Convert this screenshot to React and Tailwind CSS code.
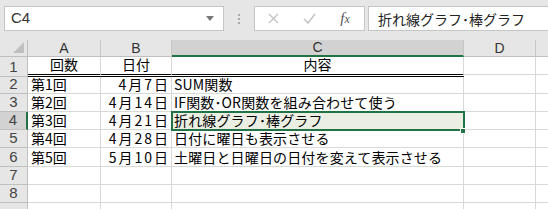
const jp = { fontFamily: '"Noto Sans CJK JP", "Noto Sans", sans-serif' };
const ui = { fontFamily: '"Liberation Sans", Arial, sans-serif' };

const rows = [
  ['回数', '日付', '内容'],
  ['第1回', '4月7日', 'SUM関数'],
  ['第2回', '4月14日', 'IF関数･OR関数を組み合わせて使う'],
  ['第3回', '4月21日', '折れ線グラフ･棒グラフ'],
  ['第4回', '4月28日', '日付に曜日も表示させる'],
  ['第5回', '5月10日', '土曜日と日曜日の日付を変えて表示させる'],
  ['', '', ''],
  ['', '', ''],
  ['', '', ''],
];

function FormulaBar() {
  return (
    <div className="flex h-[40px] items-start bg-[#e6e6e6] pt-[6px]">
      <div className="ml-[4px] flex h-[25px] w-[220px] items-center justify-between border border-[#c6c6c6] bg-white pl-[6px] pr-[9px]">
        <span className="text-[15px] text-[#333]" style={ui}>C4</span>
        <svg width="8" height="5" viewBox="0 0 8 5"><path d="M0 0h8L4 5z" fill="#777" /></svg>
      </div>
      <div className="flex h-[25px] w-[30px] flex-col items-center justify-center gap-[2px]">
        <span className="h-[2px] w-[2px] bg-[#aaa]" />
        <span className="h-[2px] w-[2px] bg-[#aaa]" />
        <span className="h-[2px] w-[2px] bg-[#aaa]" />
      </div>
      <div className="flex h-[25px] w-[111px] items-center border border-[#c6c6c6] bg-white">
        <div className="flex w-[36px] justify-center">
          <svg width="11" height="11" viewBox="0 0 11 11"><path d="M1 1l9 9M10 1l-9 9" stroke="#c4c4c4" strokeWidth="1.4" /></svg>
        </div>
        <div className="flex w-[36px] justify-center">
          <svg width="13" height="11" viewBox="0 0 13 11"><path d="M1 6l4 4 7-9" stroke="#c4c4c4" strokeWidth="1.6" fill="none" /></svg>
        </div>
        <div className="flex w-[36px] justify-center">
          <span className="text-[15px] italic text-[#555]" style={{ fontFamily: '"Liberation Serif", serif' }}>f<span className="text-[12px]">x</span></span>
        </div>
      </div>
      <div className="ml-[3px] flex h-[25px] flex-1 items-center border border-r-0 border-[#c6c6c6] bg-white pl-[9px]">
        <span className="text-[14px] leading-none text-[#222]" style={jp}>折れ線グラフ･棒グラフ</span>
      </div>
    </div>
  );
}

function ColHead({ label, active, last }) {
  return (
    <div
      className={
        'flex items-center justify-center border-r text-[14px] text-[#333] ' +
        (active
          ? 'border-b-2 border-r-[#c6c6c6] border-b-[#217346] bg-[#d2d2d2]'
          : 'border-b border-r-[#c6c6c6] border-b-[#bfbfbf] bg-[#e6e6e6]') +
        (last ? ' border-r-0' : '')
      }
      style={ui}
    >
      {label}
    </div>
  );
}

export default function App() {
  return (
    <div className="h-[209px] w-[548px] overflow-hidden bg-white">
      <FormulaBar />
      <div
        className="relative grid"
        style={{
          gridTemplateColumns: '28px 73px 71px 292px 72px 1fr',
          gridTemplateRows: '17px 20.3px 16.3px repeat(7, 18.3px)',
        }}
      >
        <div className="flex items-end justify-end border-b border-r border-[#bfbfbf] bg-[#e6e6e6] pb-[3px] pr-[3px]">
          <svg width="11" height="11" viewBox="0 0 11 11"><path d="M11 0v11H0z" fill="#c0c0c0" /></svg>
        </div>
        <ColHead label="A" />
        <ColHead label="B" />
        <ColHead label="C" active />
        <ColHead label="D" />
        <ColHead label="" last />

        {rows.map((r, i) => {
          const n = i + 1;
          const activeRow = n === 4;
          const head = n === 1;
          const cell = 'flex items-end overflow-visible whitespace-nowrap text-[14px] leading-none text-black ';
          const bottom = head ? 'border-b-[3px] border-double border-b-black ' : 'border-b border-b-[#d9d9d9] ';
          const grid = 'border-r border-r-[#d9d9d9] ';
          const plain = head
            ? 'shadow-[inset_0_-2px_0_white,inset_0_-3px_0_#d9d9d9] '
            : 'border-b border-b-[#d9d9d9] ';
          return [
            <div
              key={'h' + n}
              className={
                'flex items-end justify-center pb-[2px] text-[15px] leading-none text-[#444] ' +
                (activeRow
                  ? 'border-r-2 border-b border-r-[#217346] border-b-[#bfbfbf] bg-[#d2d2d2]'
                  : 'border-r border-b border-[#bfbfbf] bg-[#e6e6e6]')
              }
              style={ui}
            >
              {n < 9 ? n : ''}
            </div>,
            <div key={'a' + n} className={cell + bottom + grid + (head ? 'justify-center pb-[3px]' : 'pl-[3px] pb-[2px]')} style={jp}>
              {r[0]}
            </div>,
            <div key={'b' + n} className={cell + bottom + grid + (head ? 'justify-center pb-[3px]' : 'justify-end pr-[1px] pb-[2px] tracking-[2px]')} style={jp}>
              {r[1]}
            </div>,
            <div
              key={'c' + n}
              className={cell + bottom + grid + (head ? 'justify-center pb-[3px] ' : 'relative z-10 pl-[2px] pb-[2px] tracking-[0.15px] ') + (activeRow ? 'bg-[#ebefe3]' : '')}
              style={jp}
            >
              {r[2]}
            </div>,
            <div key={'d' + n} className={plain + grid} />,
            <div key={'e' + n} className={plain} />,
          ];
        })}

        <div className="pointer-events-none absolute left-[171px] top-[70.6px] z-20 h-[20.3px] w-[294px] border-2 border-[#217346]" />
        <div className="pointer-events-none absolute left-[460px] top-[88px] z-30 h-[6px] w-[6px] border border-white bg-[#217346]" />
      </div>
    </div>
  );
}
